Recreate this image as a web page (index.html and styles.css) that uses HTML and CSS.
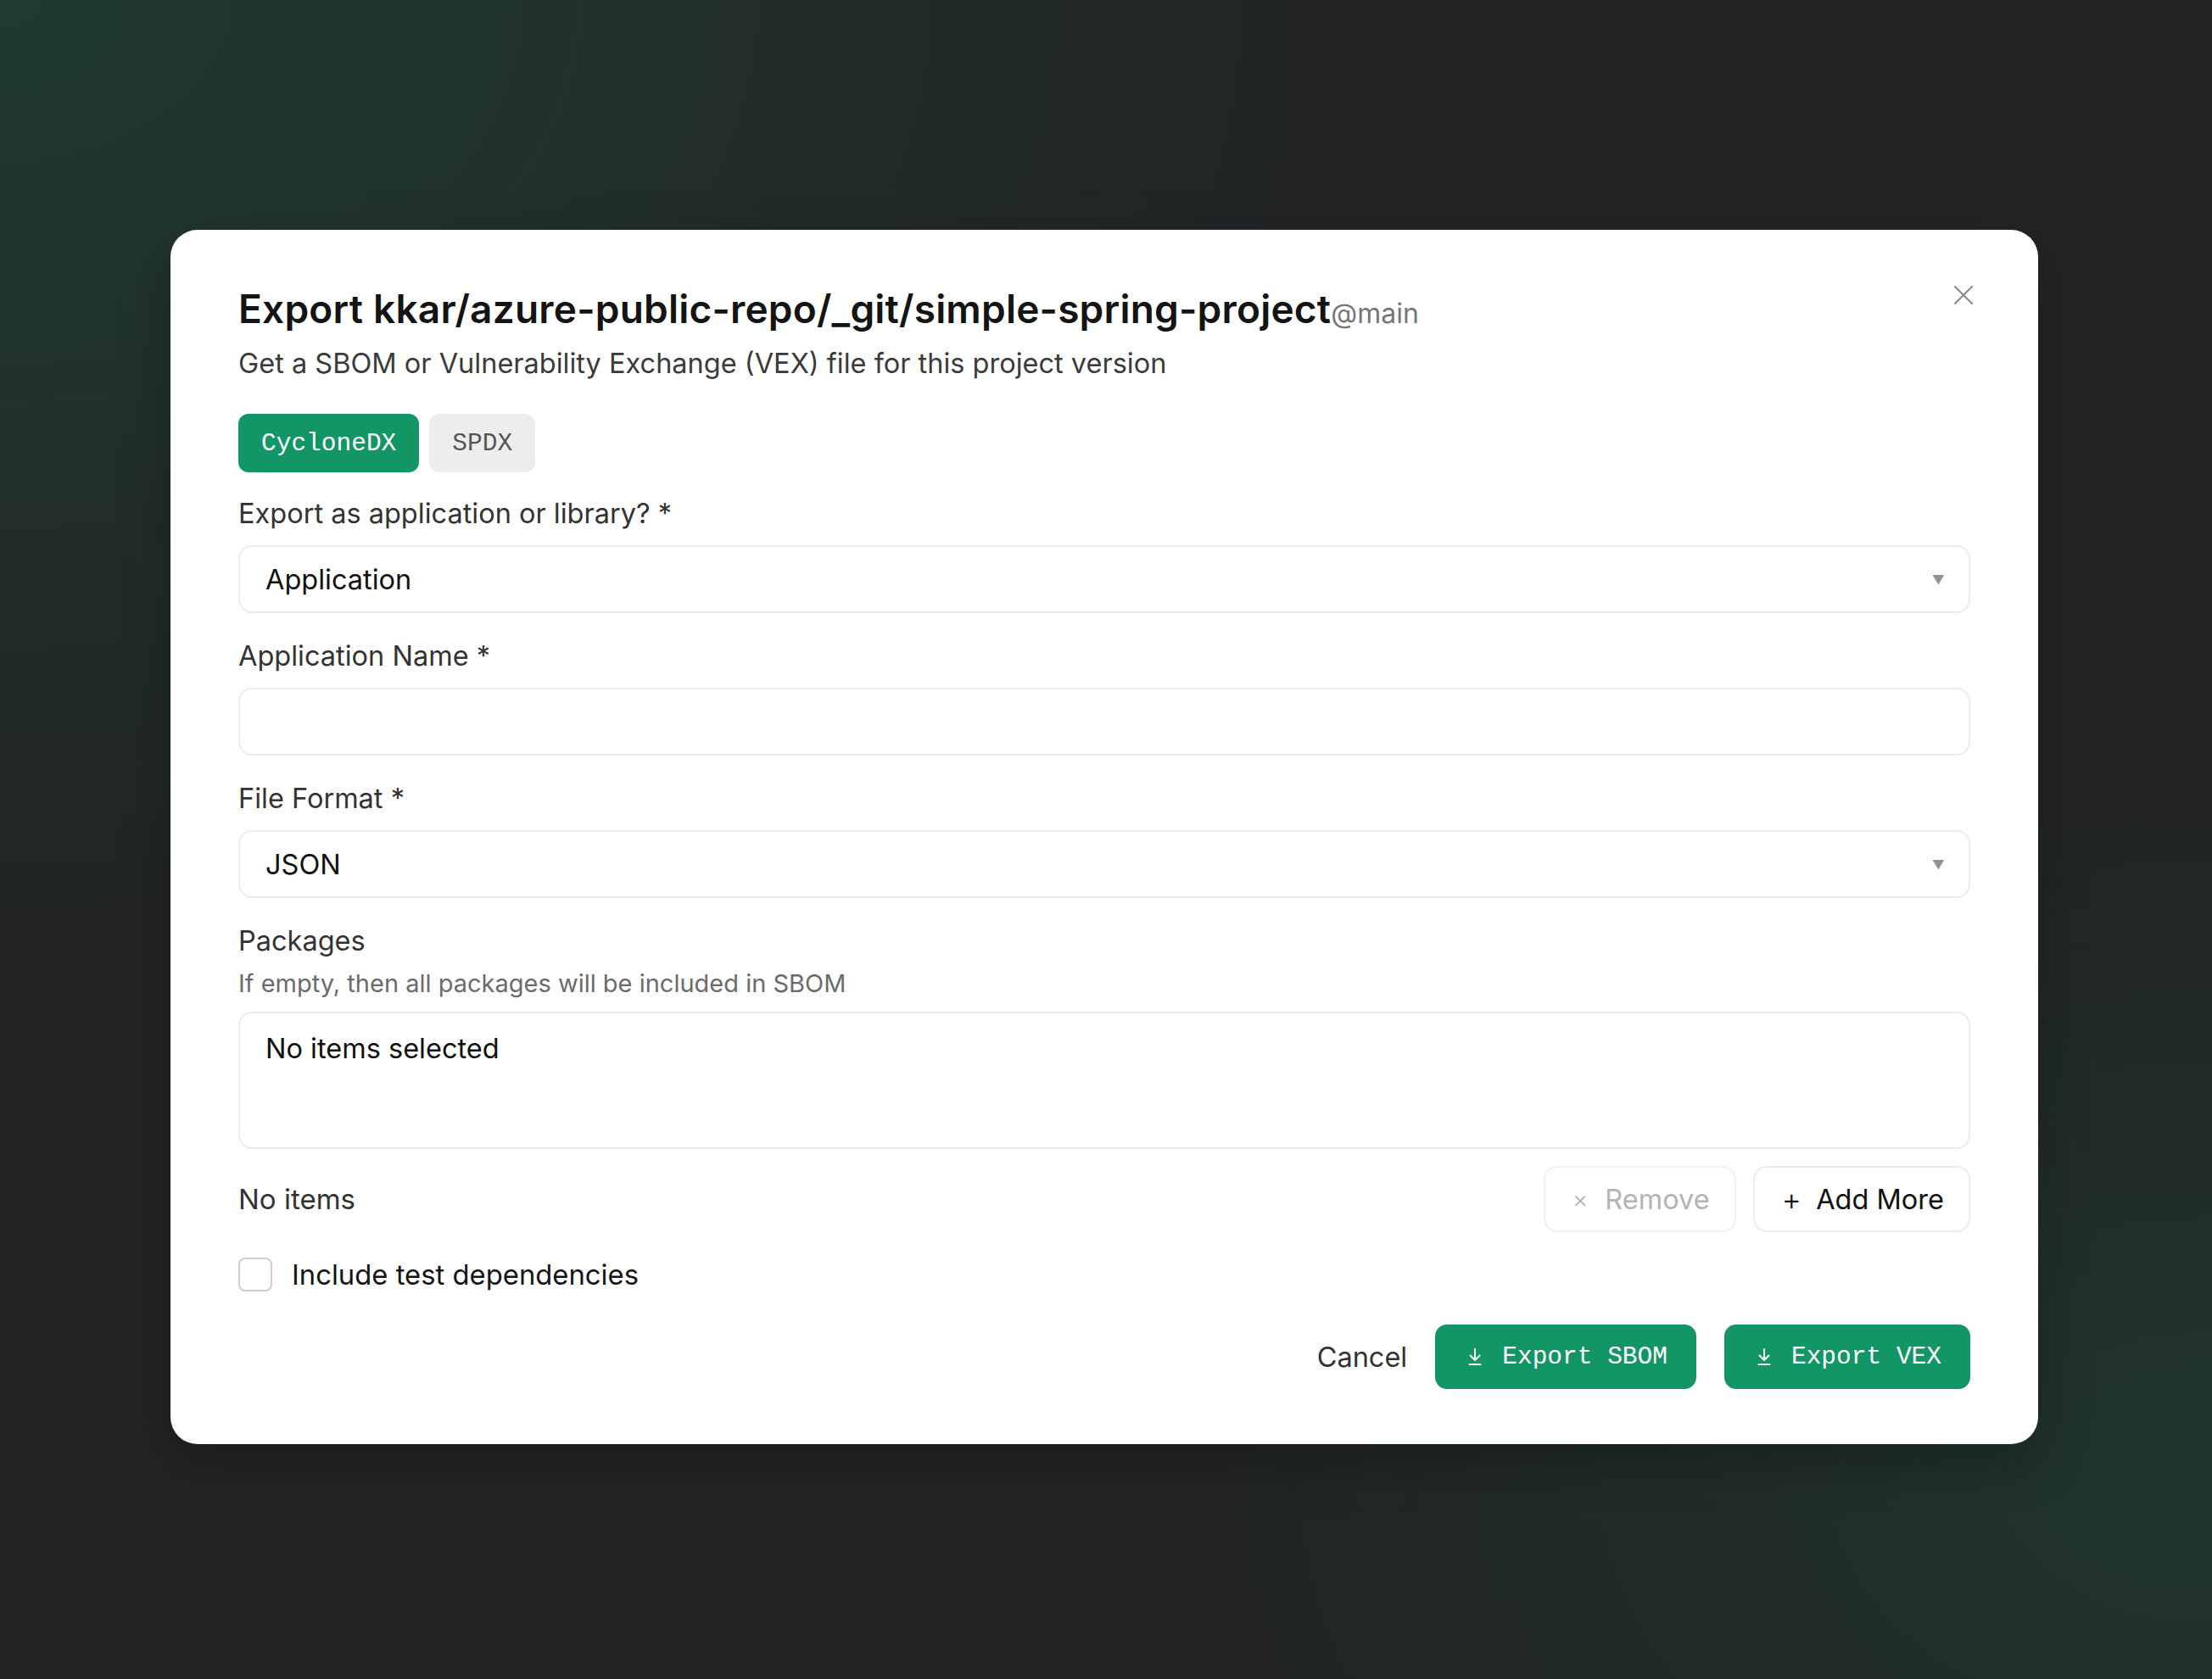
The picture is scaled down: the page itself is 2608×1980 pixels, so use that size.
FILE: index.html
```html
<!DOCTYPE html>
<html lang="en">
<head>
  <meta charset="UTF-8" />
  <meta name="viewport" content="width=device-width, initial-scale=1.0" />
  <title>Export SBOM</title>
  <link rel="stylesheet" href="styles.css">
</head>
<body>
  <div class="dialog">
    <button class="close" aria-label="Close">
      <svg viewBox="0 0 24 24" width="24" height="24"><path d="M2 2L22 22M22 2L2 22" stroke="currentColor" stroke-width="2.2" stroke-linecap="round"/></svg>
    </button>

    <header>
      <h1>Export kkar/azure-public-repo/_git/simple-spring-project<span class="ref">@main</span></h1>
      <p class="subtitle">Get a SBOM or Vulnerability Exchange (VEX) file for this project version</p>
    </header>

    <div class="tabs">
      <button class="tab active">CycloneDX</button>
      <button class="tab">SPDX</button>
    </div>

    <div class="field first">
      <label>Export as application or library? *</label>
      <div class="select">
        <span>Application</span>
        <span class="caret">▼</span>
      </div>
    </div>

    <div class="field">
      <label>Application Name *</label>
      <div class="input"></div>
    </div>

    <div class="field">
      <label>File Format *</label>
      <div class="select">
        <span>JSON</span>
        <span class="caret">▼</span>
      </div>
    </div>

    <div class="field">
      <label>Packages</label>
      <p class="hint">If empty, then all packages will be included in SBOM</p>
      <div class="list-box">No items selected</div>
    </div>

    <div class="list-actions">
      <span class="count">No items</span>
      <div class="actions">
        <button class="btn-outline disabled"><span class="sym small">×</span>Remove</button>
        <button class="btn-outline"><span class="sym">+</span>Add More</button>
      </div>
    </div>

    <label class="check">
      <span class="box"></span>
      Include test dependencies
    </label>

    <footer>
      <button class="cancel">Cancel</button>
      <button class="btn-primary">
        <svg viewBox="0 0 20 24" width="20" height="24"><path d="M10 3V16M4.5 10.5L10 16L15.5 10.5M3.5 21H16.5" stroke="currentColor" stroke-width="2" fill="none" stroke-linecap="round" stroke-linejoin="round"/></svg>
        Export SBOM
      </button>
      <button class="btn-primary">
        <svg viewBox="0 0 20 24" width="20" height="24"><path d="M10 3V16M4.5 10.5L10 16L15.5 10.5M3.5 21H16.5" stroke="currentColor" stroke-width="2" fill="none" stroke-linecap="round" stroke-linejoin="round"/></svg>
        Export VEX
      </button>
    </footer>
  </div>
</body>
</html>
```

FILE: styles.css
```css
* {
  margin: 0;
  padding: 0;
  box-sizing: border-box;
}
body {
  font-family: Inter, 'Noto Sans', sans-serif;
  background:
    radial-gradient(ellipse 60% 55% at 0% 0%, #1f3a2f 0%, rgba(34, 36, 38, 0) 100%),
    radial-gradient(ellipse 45% 40% at 100% 88%, #1f352c 0%, rgba(34, 36, 38, 0) 100%),
    #222426;
  min-height: 100vh;
  padding-top: 271px;
  color: #151515;
}
button {
  font: inherit;
  background: none;
  border: none;
  cursor: pointer;
}
.dialog {
  position: relative;
  width: 2202px;
  margin-left: 201px;
  background: #fff;
  border-radius: 32px;
  padding: 66px 80px 65px;
  box-shadow: 0 20px 60px rgba(0, 0, 0, 0.25);
}
.close {
  position: absolute;
  top: 65px;
  right: 76px;
  color: #8c8c8c;
  width: 24px;
  height: 24px;
  display: flex;
}
h1 {
  font-size: 46px;
  font-weight: 600;
  line-height: 54px;
  letter-spacing: 0.2px;
  color: #141414;
}
.ref {
  font-size: 32px;
  font-weight: 400;
  letter-spacing: 0;
  color: #767676;
}
.subtitle {
  margin-top: 12px;
  font-size: 32.5px;
  line-height: 40px;
  color: #3b3b3b;
}
.tabs {
  display: flex;
  gap: 12px;
  margin-top: 39px;
}
.tab {
  height: 69px;
  padding: 0 27px;
  border-radius: 12px;
  font-family: 'Liberation Mono', monospace;
  font-size: 29.5px;
  background: #ededee;
  color: #555;
}
.tab.active {
  background: #139665;
  color: #fff;
}
.field {
  margin-top: 31px;
}
.field.first {
  margin-top: 29px;
}
.field label {
  display: block;
  font-size: 32.5px;
  line-height: 40px;
  color: #333;
  margin-bottom: 17px;
}
.select,
.input {
  height: 80px;
  border: 2px solid #ececee;
  border-radius: 16px;
  padding: 0 30px;
  display: flex;
  align-items: center;
  justify-content: space-between;
  font-size: 32.5px;
  color: #111;
}
.caret {
  font-size: 15px;
  color: #8d9292;
  margin-right: -2px;
}
.hint {
  margin-top: -5px;
  font-size: 29px;
  line-height: 36px;
  color: #6b6b6b;
  margin-bottom: 15px;
}
.list-box {
  height: 162px;
  border: 2px solid #ececee;
  border-radius: 16px;
  padding: 22px 30px;
  font-size: 32.5px;
  line-height: 40px;
  color: #111;
}
.list-actions {
  margin-top: 20px;
  display: flex;
  justify-content: space-between;
  align-items: center;
}
.count {
  font-size: 33px;
  color: #333;
}
.actions {
  display: flex;
  gap: 20px;
}
.btn-outline {
  height: 78px;
  padding: 0 29px 0 32px;
  border: 2px solid #ececee;
  border-radius: 16px;
  font-size: 32.5px;
  color: #111;
  display: flex;
  align-items: center;
}
.btn-outline .sym {
  font-size: 36px;
  margin-right: 17px;
  font-weight: 300;
}
.btn-outline .sym.small {
  font-size: 28px;
  margin-right: 20px;
}
.btn-outline.disabled {
  color: #b4b4b4;
  border-color: #f0f0f1;
}
.check {
  margin-top: 30px;
  display: flex;
  align-items: center;
  gap: 23px;
  font-size: 32.8px;
  line-height: 40px;
  color: #141414;
}
.box {
  width: 40px;
  height: 40px;
  border: 2px solid #cfcfcf;
  border-radius: 8px;
}
footer {
  margin-top: 39px;
  display: flex;
  justify-content: flex-end;
  align-items: center;
  gap: 33px;
}
.cancel {
  font-size: 32.5px;
  color: #333;
}
.btn-primary {
  height: 76px;
  padding: 0 34px 0 37px;
  border-radius: 14px;
  background: #139665;
  color: #fff;
  font-family: 'Liberation Mono', monospace;
  font-size: 29.5px;
  display: flex;
  align-items: center;
  gap: 22px;
}
```
